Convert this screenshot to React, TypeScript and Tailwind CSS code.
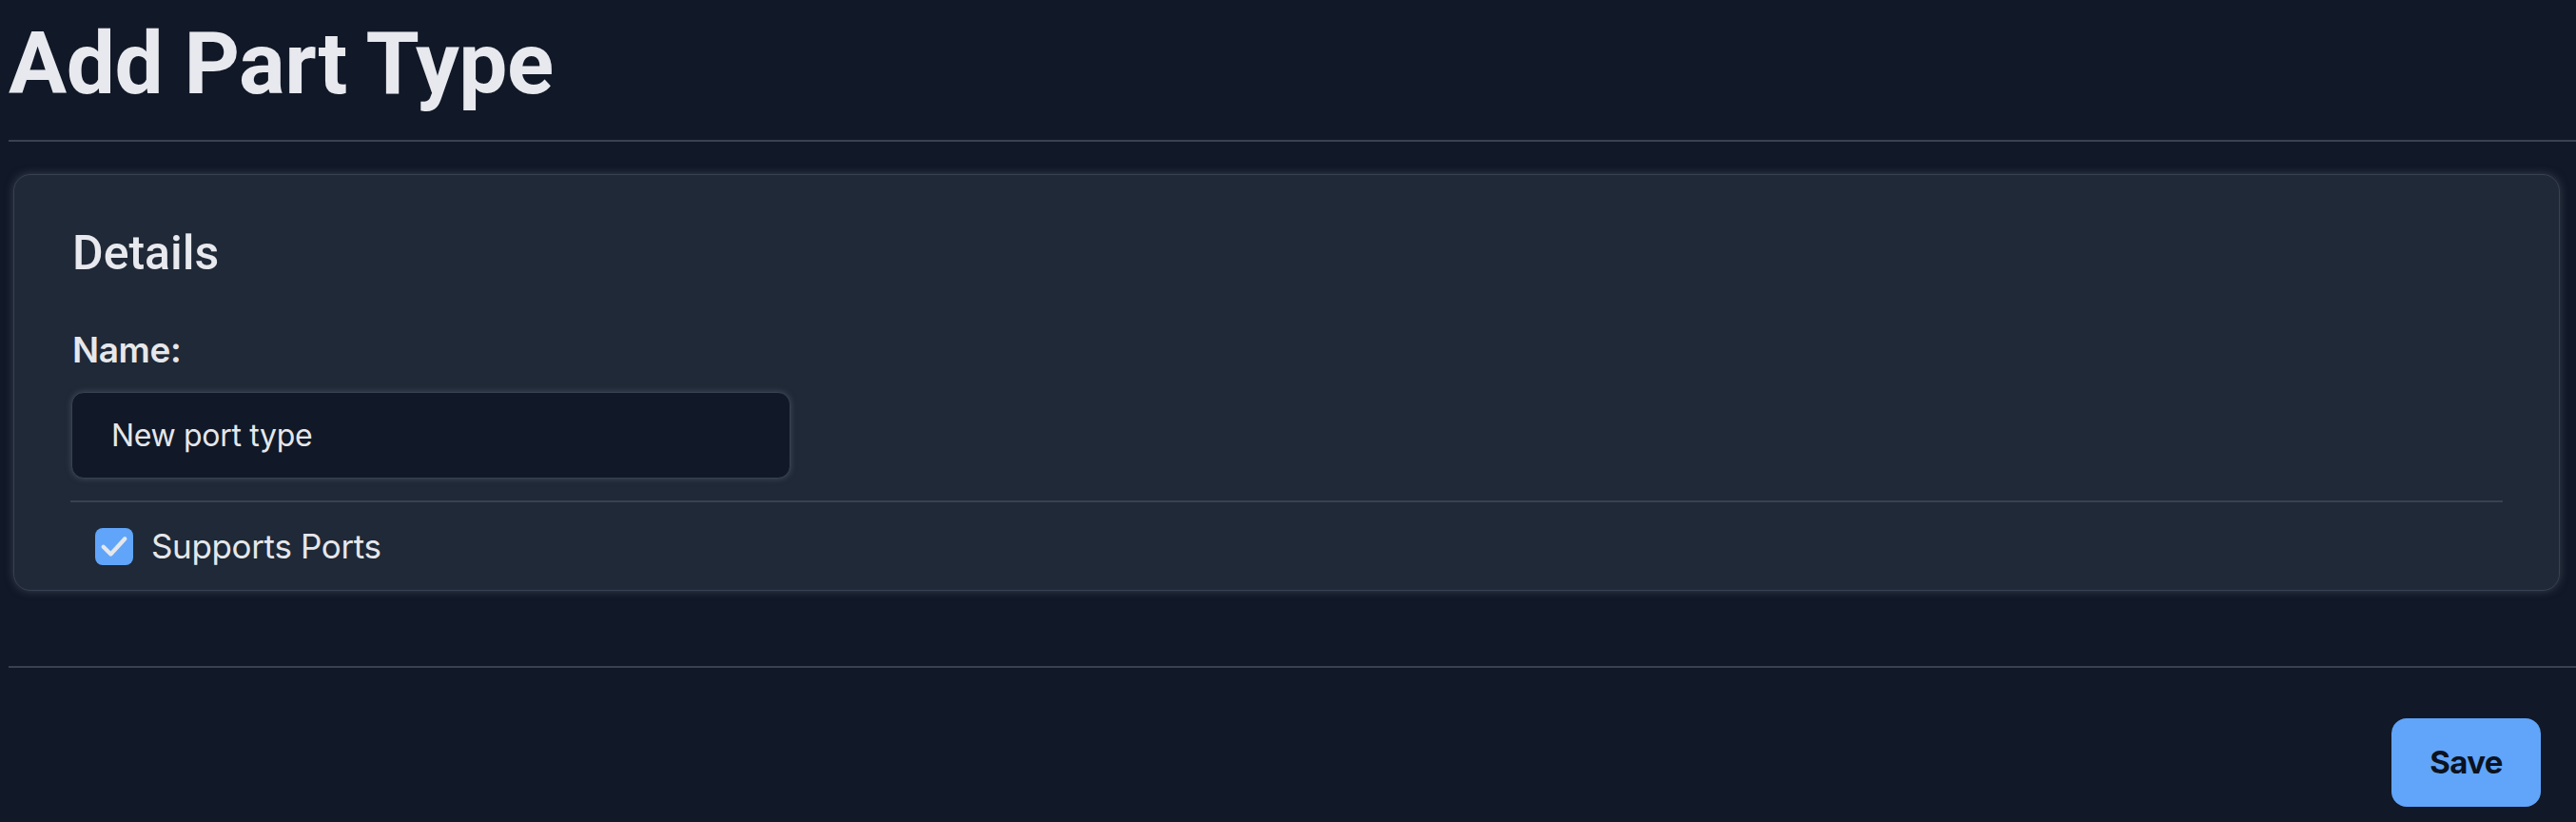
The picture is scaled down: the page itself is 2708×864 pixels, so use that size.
import { useState } from 'react';

const headingFont = { fontFamily: 'Roboto, "Liberation Sans", sans-serif' };

function CheckMark(): JSX.Element {
  return (
    <svg viewBox="0 0 24 24" className="h-[34px] w-[34px]" fill="none">
      <polyline
        points="4,12.5 9.5,18 20,6.5"
        stroke="#e5e7eb"
        strokeWidth="3"
        strokeLinecap="round"
        strokeLinejoin="round"
      />
    </svg>
  );
}

export default function App(): JSX.Element {
  const [name, setName] = useState('New port type');
  const [supportsPorts, setSupportsPorts] = useState(true);

  return (
    <div
      className="min-h-[864px] w-full bg-[#111827] pl-[9px] pt-[12px] text-gray-200"
      style={{ fontFamily: 'Inter, "Noto Sans", sans-serif' }}
    >
      <h1 className="text-[91px] font-bold leading-[110px] tracking-[-0.005em] text-[#e8e9ee]" style={headingFont}>
        Add Part Type
      </h1>

      <div className="mt-[25px] h-[2px] bg-[#3a414f]" />

      <section className="ml-[5px] mr-[17px] mt-[34px] rounded-[18px] border border-[#374151] bg-[#1f2937] px-[59px] pb-[25px] pt-[52px] shadow-[0_0_10px_rgba(90,100,115,0.55)]">
        <h2 className="ml-[2px] text-[50px] font-medium leading-[60px] text-[#e8e9ee]" style={headingFont}>
          Details
        </h2>

        <label className="ml-[2px] mt-[50px] block text-[37px] font-semibold leading-[44px] tracking-[-0.01em] text-[#e5e7eb]">
          Name:
        </label>

        <div className="ml-[1px] mt-[22px] flex h-[91px] w-[756px] items-center rounded-[13px] border border-[#374151] bg-[#111827] px-[41px] shadow-[0_0_6px_rgba(90,100,115,0.6)]">
          <input
            value={name}
            onChange={(e) => setName(e.target.value)}
            className="w-full bg-transparent text-[32px] leading-[39px] tracking-[-0.01em] text-[#e5e7eb] outline-none"
          />
        </div>

        <div className="mt-[23px] h-[2px] bg-[#3a414f]" />

        <div className="ml-[26px] mt-[25px] flex items-center gap-[19px]">
          <button
            type="button"
            onClick={() => setSupportsPorts(!supportsPorts)}
            className={`flex h-[39px] w-[40px] items-center justify-center rounded-[8px] ${supportsPorts ? 'bg-[#60a5fa]' : 'border-2 border-gray-500 bg-transparent'}`}
          >
            {supportsPorts && <CheckMark />}
          </button>
          <span className="text-[35px] leading-[42px] tracking-[-0.01em] text-[#e5e7eb]">Supports Ports</span>
        </div>
      </section>

      <div className="mt-[79px] h-[2px] bg-[#3a414f]" />

      <div className="flex justify-end pr-[37px] pt-[53px]">
        <button
          type="button"
          className="flex h-[93px] w-[157px] items-center justify-center rounded-[16px] bg-[#60a5fa] text-[33px] font-bold tracking-[-0.02em] text-[#0b1220]"
        >
          Save
        </button>
      </div>
    </div>
  );
}
